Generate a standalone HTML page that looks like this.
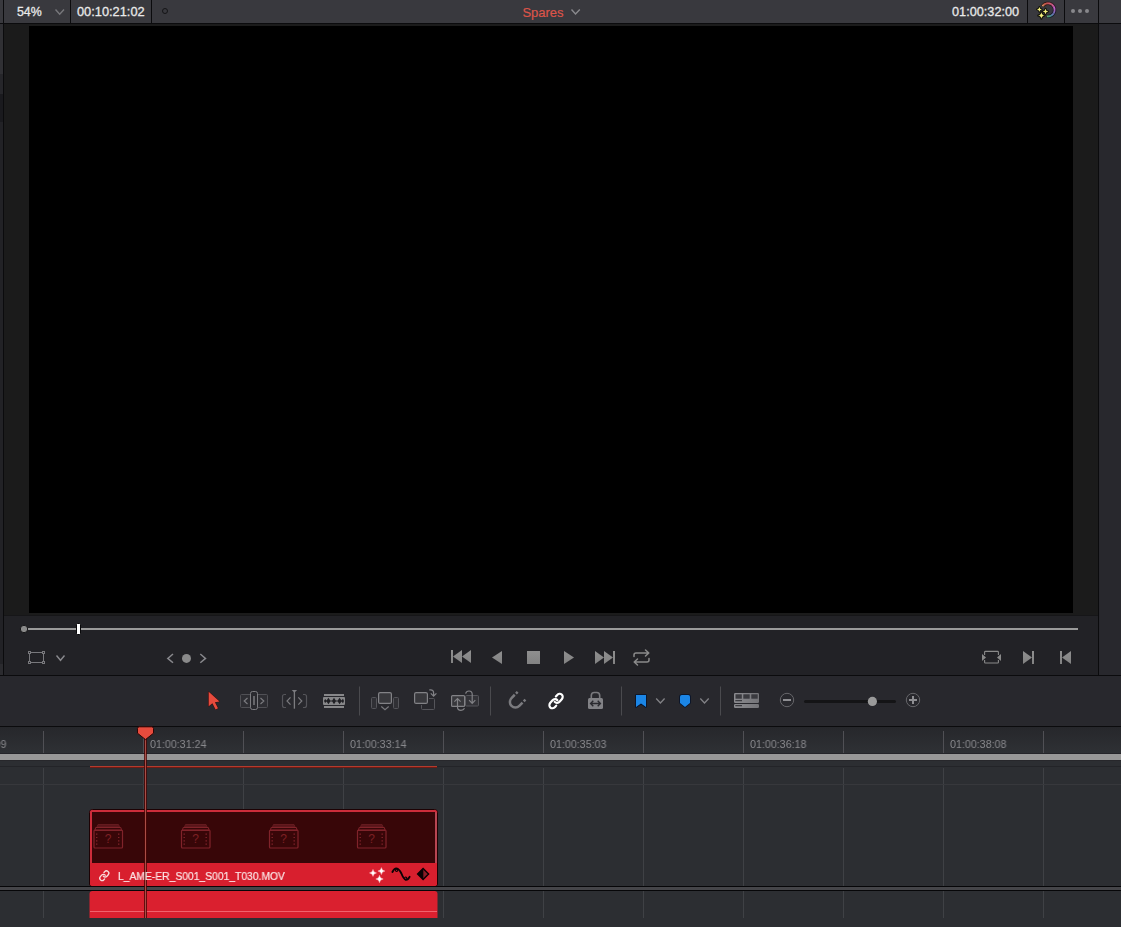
<!DOCTYPE html>
<html><head><meta charset="utf-8">
<style>
*{margin:0;padding:0;box-sizing:border-box}
html,body{width:1121px;height:927px;overflow:hidden;background:#28282d;font-family:"Liberation Sans",sans-serif}
.a{position:absolute}
.t{position:absolute;white-space:nowrap;line-height:1}
svg{position:absolute;overflow:visible}
</style></head><body>
<!-- TOP BAR -->
<div class="a" style="left:0;top:0;width:1121px;height:23px;background:#39393e"></div>
<div class="a" style="left:0;top:23px;width:1121px;height:1px;background:#0b0b0d"></div>
<div class="a" style="left:3px;top:0;width:1px;height:23px;background:#0b0b0d"></div>
<div class="a" style="left:70px;top:0;width:1px;height:23px;background:#0b0b0d"></div>
<div class="a" style="left:151px;top:0;width:1px;height:23px;background:#0b0b0d"></div>
<div class="a" style="left:1027px;top:0;width:1px;height:23px;background:#0b0b0d"></div>
<div class="a" style="left:1064px;top:0;width:1px;height:23px;background:#0b0b0d"></div>
<div class="a" style="left:1098px;top:0;width:1px;height:23px;background:#0b0b0d"></div>
<div class="t" id="t54" style="left:17.3px;top:5px;font-size:13px;color:#e9e9e9;transform:scaleX(0.95);transform-origin:0 0;-webkit-text-stroke:0.3px #e9e9e9">54%</div>
<div class="t" id="ttc1" style="left:77px;top:5px;transform:scaleX(0.985);transform-origin:0 0;font-size:13px;color:#e9e9e9;-webkit-text-stroke:0.3px #e9e9e9">00:10:21:02</div>
<div class="t" id="tsp" style="left:522.4px;top:6px;font-size:13px;color:#dc5449;-webkit-text-stroke:0.2px #dc5449">Spares</div>
<div class="t" id="ttc2" style="left:952.3px;top:5px;transform:scaleX(0.977);transform-origin:0 0;font-size:13px;color:#e9e9e9;-webkit-text-stroke:0.3px #e9e9e9">01:00:32:00</div>
<svg style="left:0;top:0" width="1121" height="24" fill="none">
 <path d="M55.5 9.5 L59.7 14.2 L64 9.5" stroke="#77777b" stroke-width="1.4"/>
 <path d="M571.5 9.5 L575.5 14 L579.8 9.5" stroke="#8a8a8e" stroke-width="1.4"/>
 <circle cx="165" cy="11" r="2.5" stroke="#141416" stroke-width="1"/>
 <path d="M1042.39 6.48A6.55 6.55 0 0 1 1043.19 5.41" stroke="rgb(51, 35, 25)" stroke-width="3.3" fill="none"/><path d="M1043.07 5.54A6.55 6.55 0 0 1 1043.87 4.77" stroke="rgb(50, 30, 22)" stroke-width="3.3" fill="none"/><path d="M1043.74 4.88A6.55 6.55 0 0 1 1044.64 4.23" stroke="rgb(48, 25, 20)" stroke-width="3.3" fill="none"/><path d="M1044.49 4.32A6.55 6.55 0 0 1 1045.47 3.81" stroke="rgb(47, 22, 18)" stroke-width="3.3" fill="none"/><path d="M1045.32 3.88A6.55 6.55 0 0 1 1046.36 3.51" stroke="rgb(47, 21, 18)" stroke-width="3.3" fill="none"/><path d="M1046.19 3.55A6.55 6.55 0 0 1 1047.28 3.34" stroke="rgb(46, 20, 19)" stroke-width="3.3" fill="none"/><path d="M1047.11 3.36A6.55 6.55 0 0 1 1048.22 3.30" stroke="rgb(45, 19, 20)" stroke-width="3.3" fill="none"/><path d="M1048.05 3.30A6.55 6.55 0 0 1 1049.15 3.40" stroke="rgb(45, 19, 22)" stroke-width="3.3" fill="none"/><path d="M1048.98 3.37A6.55 6.55 0 0 1 1050.06 3.63" stroke="rgb(46, 20, 24)" stroke-width="3.3" fill="none"/><path d="M1049.89 3.58A6.55 6.55 0 0 1 1050.92 3.99" stroke="rgb(46, 20, 26)" stroke-width="3.3" fill="none"/><path d="M1050.77 3.91A6.55 6.55 0 0 1 1051.73 4.46" stroke="rgb(46, 21, 28)" stroke-width="3.3" fill="none"/><path d="M1051.59 4.37A6.55 6.55 0 0 1 1052.46 5.05" stroke="rgb(47, 21, 30)" stroke-width="3.3" fill="none"/><path d="M1052.33 4.94A6.55 6.55 0 0 1 1053.10 5.74" stroke="rgb(46, 22, 34)" stroke-width="3.3" fill="none"/><path d="M1052.99 5.60A6.55 6.55 0 0 1 1053.63 6.51" stroke="rgb(46, 22, 38)" stroke-width="3.3" fill="none"/><path d="M1053.54 6.36A6.55 6.55 0 0 1 1054.05 7.34" stroke="rgb(46, 22, 42)" stroke-width="3.3" fill="none"/><path d="M1053.98 7.19A6.55 6.55 0 0 1 1054.35 8.23" stroke="rgb(45, 22, 45)" stroke-width="3.3" fill="none"/><path d="M1054.30 8.07A6.55 6.55 0 0 1 1054.51 9.15" stroke="rgb(41, 22, 44)" stroke-width="3.3" fill="none"/><path d="M1054.49 8.98A6.55 6.55 0 0 1 1054.55 10.09" stroke="rgb(38, 22, 43)" stroke-width="3.3" fill="none"/><path d="M1054.55 9.92A6.55 6.55 0 0 1 1054.44 11.02" stroke="rgb(35, 22, 42)" stroke-width="3.3" fill="none"/><path d="M1054.47 10.85A6.55 6.55 0 0 1 1054.21 11.93" stroke="rgb(32, 22, 41)" stroke-width="3.3" fill="none"/><path d="M1054.26 11.77A6.55 6.55 0 0 1 1053.85 12.79" stroke="rgb(29, 24, 41)" stroke-width="3.3" fill="none"/><path d="M1053.93 12.64A6.55 6.55 0 0 1 1053.37 13.60" stroke="rgb(27, 25, 41)" stroke-width="3.3" fill="none"/><path d="M1053.47 13.46A6.55 6.55 0 0 1 1052.78 14.33" stroke="rgb(25, 26, 41)" stroke-width="3.3" fill="none"/><path d="M1052.90 14.20A6.55 6.55 0 0 1 1052.10 14.96" stroke="rgb(24, 29, 41)" stroke-width="3.3" fill="none"/><path d="M1052.23 14.85A6.55 6.55 0 0 1 1051.32 15.49" stroke="rgb(22, 31, 42)" stroke-width="3.3" fill="none"/><path d="M1051.47 15.40A6.55 6.55 0 0 1 1050.49 15.91" stroke="rgb(21, 33, 38)" stroke-width="3.3" fill="none"/><path d="M1050.64 15.84A6.55 6.55 0 0 1 1049.60 16.20" stroke="rgb(19, 35, 35)" stroke-width="3.3" fill="none"/><path d="M1049.76 16.16A6.55 6.55 0 0 1 1048.67 16.37" stroke="rgb(19, 37, 31)" stroke-width="3.3" fill="none"/><path d="M1048.84 16.35A6.55 6.55 0 0 1 1047.74 16.39" stroke="rgb(21, 37, 29)" stroke-width="3.3" fill="none"/><path d="M1047.91 16.40A6.55 6.55 0 0 1 1046.75 16.28" stroke="rgb(22, 38, 26)" stroke-width="3.3" fill="none"/><path d="M1042.51 6.28A6.55 6.55 0 0 1 1043.19 5.41" stroke="rgb(232, 157, 113)" stroke-width="1.7" fill="none"/><path d="M1043.07 5.54A6.55 6.55 0 0 1 1043.87 4.77" stroke="rgb(226, 136, 101)" stroke-width="1.7" fill="none"/><path d="M1043.74 4.88A6.55 6.55 0 0 1 1044.64 4.23" stroke="rgb(220, 115, 89)" stroke-width="1.7" fill="none"/><path d="M1044.49 4.32A6.55 6.55 0 0 1 1045.47 3.81" stroke="rgb(215, 99, 81)" stroke-width="1.7" fill="none"/><path d="M1045.32 3.88A6.55 6.55 0 0 1 1046.36 3.51" stroke="rgb(212, 95, 84)" stroke-width="1.7" fill="none"/><path d="M1046.19 3.55A6.55 6.55 0 0 1 1047.28 3.34" stroke="rgb(209, 91, 88)" stroke-width="1.7" fill="none"/><path d="M1047.11 3.36A6.55 6.55 0 0 1 1048.22 3.30" stroke="rgb(206, 86, 91)" stroke-width="1.7" fill="none"/><path d="M1048.05 3.30A6.55 6.55 0 0 1 1049.15 3.40" stroke="rgb(206, 87, 98)" stroke-width="1.7" fill="none"/><path d="M1048.98 3.37A6.55 6.55 0 0 1 1050.06 3.63" stroke="rgb(207, 89, 108)" stroke-width="1.7" fill="none"/><path d="M1049.89 3.58A6.55 6.55 0 0 1 1050.92 3.99" stroke="rgb(209, 92, 118)" stroke-width="1.7" fill="none"/><path d="M1050.77 3.91A6.55 6.55 0 0 1 1051.73 4.46" stroke="rgb(210, 95, 128)" stroke-width="1.7" fill="none"/><path d="M1051.59 4.37A6.55 6.55 0 0 1 1052.46 5.05" stroke="rgb(212, 97, 138)" stroke-width="1.7" fill="none"/><path d="M1052.33 4.94A6.55 6.55 0 0 1 1053.10 5.74" stroke="rgb(211, 98, 154)" stroke-width="1.7" fill="none"/><path d="M1052.99 5.60A6.55 6.55 0 0 1 1053.63 6.51" stroke="rgb(209, 99, 171)" stroke-width="1.7" fill="none"/><path d="M1053.54 6.36A6.55 6.55 0 0 1 1054.05 7.34" stroke="rgb(207, 100, 189)" stroke-width="1.7" fill="none"/><path d="M1053.98 7.19A6.55 6.55 0 0 1 1054.35 8.23" stroke="rgb(203, 100, 204)" stroke-width="1.7" fill="none"/><path d="M1054.30 8.07A6.55 6.55 0 0 1 1054.51 9.15" stroke="rgb(188, 100, 199)" stroke-width="1.7" fill="none"/><path d="M1054.49 8.98A6.55 6.55 0 0 1 1054.55 10.09" stroke="rgb(173, 100, 194)" stroke-width="1.7" fill="none"/><path d="M1054.55 9.92A6.55 6.55 0 0 1 1054.44 11.02" stroke="rgb(158, 100, 189)" stroke-width="1.7" fill="none"/><path d="M1054.47 10.85A6.55 6.55 0 0 1 1054.21 11.93" stroke="rgb(145, 102, 186)" stroke-width="1.7" fill="none"/><path d="M1054.26 11.77A6.55 6.55 0 0 1 1053.85 12.79" stroke="rgb(134, 108, 186)" stroke-width="1.7" fill="none"/><path d="M1053.93 12.64A6.55 6.55 0 0 1 1053.37 13.60" stroke="rgb(123, 113, 186)" stroke-width="1.7" fill="none"/><path d="M1053.47 13.46A6.55 6.55 0 0 1 1052.78 14.33" stroke="rgb(113, 120, 187)" stroke-width="1.7" fill="none"/><path d="M1052.90 14.20A6.55 6.55 0 0 1 1052.10 14.96" stroke="rgb(107, 130, 188)" stroke-width="1.7" fill="none"/><path d="M1052.23 14.85A6.55 6.55 0 0 1 1051.32 15.49" stroke="rgb(100, 140, 190)" stroke-width="1.7" fill="none"/><path d="M1051.47 15.40A6.55 6.55 0 0 1 1050.49 15.91" stroke="rgb(94, 149, 174)" stroke-width="1.7" fill="none"/><path d="M1050.64 15.84A6.55 6.55 0 0 1 1049.60 16.20" stroke="rgb(87, 159, 158)" stroke-width="1.7" fill="none"/><path d="M1049.76 16.16A6.55 6.55 0 0 1 1048.67 16.37" stroke="rgb(88, 166, 143)" stroke-width="1.7" fill="none"/><path d="M1048.84 16.35A6.55 6.55 0 0 1 1047.74 16.39" stroke="rgb(94, 170, 130)" stroke-width="1.7" fill="none"/><path d="M1047.91 16.40A6.55 6.55 0 0 1 1046.98 16.32" stroke="rgb(101, 174, 118)" stroke-width="1.7" fill="none"/><path d="M1039.4 7.0Q1039.64 9.16 1041.8000000000002 9.4Q1039.64 9.64 1039.4 11.8Q1039.16 9.64 1037.0 9.4Q1039.16 9.16 1039.4 7.0Z" fill="#f4f07e" stroke="#121208" stroke-width="1.8" stroke-linejoin="round" paint-order="stroke"/><path d="M1045.5 8.7Q1045.78 11.22 1048.3 11.5Q1045.78 11.78 1045.5 14.3Q1045.22 11.78 1042.7 11.5Q1045.22 11.22 1045.5 8.7Z" fill="#f4f07e" stroke="#121208" stroke-width="1.8" stroke-linejoin="round" paint-order="stroke"/><path d="M1041.4 12.2Q1041.73 15.17 1044.7 15.5Q1041.73 15.83 1041.4 18.8Q1041.0700000000002 15.83 1038.1000000000001 15.5Q1041.0700000000002 15.17 1041.4 12.2Z" fill="#f4f07e" stroke="#121208" stroke-width="1.8" stroke-linejoin="round" paint-order="stroke"/>
 <circle cx="1073" cy="11" r="2" fill="#88888c"/><circle cx="1080" cy="11" r="2" fill="#88888c"/><circle cx="1087" cy="11" r="2" fill="#88888c"/>
</svg>
<!-- LEFT STRIP -->
<div class="a" style="left:0;top:24px;width:3px;height:50px;background:#303034"></div>
<div class="a" style="left:0;top:74px;width:3px;height:20px;background:#26262a"></div>
<div class="a" style="left:0;top:94px;width:3px;height:28px;background:#1a1a1e"></div>
<div class="a" style="left:0;top:122px;width:3px;height:542px;background:#222226"></div>
<div class="a" style="left:0;top:664px;width:3px;height:11px;background:#2b2b2f"></div>
<div class="a" style="left:3px;top:24px;width:1px;height:651px;background:#0b0b0d"></div>
<!-- VIEWER -->
<div class="a" style="left:4px;top:24px;width:1094px;height:591px;background:#1b1b1b"></div>
<div class="a" style="left:29px;top:26px;width:1044px;height:587px;background:#000"></div>
<div class="a" style="left:4px;top:615px;width:1094px;height:1px;background:#161618"></div>
<div class="a" style="left:1098px;top:24px;width:1px;height:651px;background:#0b0b0d"></div>
<!-- TRANSPORT -->
<div class="a" style="left:4px;top:616px;width:1094px;height:59px;background:#222226"></div>
<div class="a" style="left:0;top:675px;width:1121px;height:1px;background:#0b0b0d"></div>
<svg id="transport" style="left:0;top:616px" width="1121" height="60" viewBox="0 616 1121 60" fill="none">
 <rect x="27" y="628" width="1051" height="2" fill="#9a9a9a"/>
 <circle cx="24" cy="629" r="3.7" fill="#8a8a8a" stroke="#0c0c0e" stroke-width="0.9"/>
 <rect x="76.5" y="623.5" width="4" height="11" rx="0.8" fill="#fff" stroke="#070709" stroke-width="1"/>
 <g stroke="#78787c" stroke-width="1">
  <path d="M31 652.5H42M31 662.5H42M29.5 654V661M43.5 654V661"/>
  <rect x="28.5" y="651.5" width="2" height="2"/><rect x="42.5" y="651.5" width="2" height="2"/>
  <rect x="28.5" y="661.5" width="2" height="2"/><rect x="42.5" y="661.5" width="2" height="2"/>
 </g>
 <path d="M56.5 655.5L60.5 660.3L64.5 655.5" stroke="#88888c" stroke-width="1.4"/>
 <path d="M173 654L167.8 658.4L173 662.8" stroke="#88888c" stroke-width="1.5"/>
 <circle cx="186.5" cy="658.4" r="4.5" fill="#8a8a8a"/>
 <path d="M200.3 654L205.5 658.4L200.3 662.8" stroke="#88888c" stroke-width="1.5"/>
 <defs><linearGradient id="tg" gradientUnits="userSpaceOnUse" x1="0" y1="650" x2="0" y2="664"><stop offset="0" stop-color="#909090"/><stop offset="1" stop-color="#828282"/></linearGradient></defs>
 <g fill="url(#tg)">
  <rect x="451" y="650" width="2" height="13"/><path d="M462 650V663L453 656.5Z"/><path d="M471 650V663L462 656.5Z"/>
  <path d="M502 651V664L492 657.5Z"/>
  <rect x="527" y="651" width="13" height="13"/>
  <path d="M564 651V664L574 657.5Z"/>
  <path d="M595 651V664L604 657.5Z"/><path d="M604 651V664L613 657.5Z"/><rect x="613" y="651" width="2" height="13"/>
  <path d="M1023 651V664L1032 657.5Z"/><rect x="1032" y="651" width="2" height="13"/>
  <rect x="1060" y="651" width="2" height="13"/><path d="M1071 651V664L1062 657.5Z"/>
  <path d="M982 654V661L986 657.5Z"/><path d="M1001 654V661L997 657.5Z"/>
 </g>
 <path d="M984.6 655V652.2Q984.6 651.4 985.4 651.4H997.6Q998.4 651.4 998.4 652.2V655M984.6 660V662.2Q984.6 663 985.4 663H997.6Q998.4 663 998.4 662.2V660" stroke="#8a8a8a" stroke-width="1.1"/>
 <g stroke="#8a8a8a" stroke-width="1.5" stroke-linecap="round" stroke-linejoin="round">
  <path d="M634 656.5V655Q634 653 636 653H648.5M645.5 650L648.8 653L645.5 656"/>
  <path d="M649 658.5V660Q649 662 647 662H634.5M637.5 659L634.2 662L637.5 665"/>
 </g>
</svg>
<!-- TOOLBAR -->
<div class="a" style="left:0;top:676px;width:1121px;height:50px;background:#28282d"></div>
<div class="a" style="left:0;top:726px;width:1121px;height:1px;background:#0b0b0d"></div>
<svg id="toolbar" style="left:0;top:676px" width="1121" height="50" viewBox="0 676 1121 50" fill="none">
 <!-- arrow -->
 <path d="M208.7 691.8V706.3L212.4 703.2L215.6 709.4L218 708.2L214.9 702.2L219.5 701.4Z" fill="#e64b3d" stroke="#3a0b0b" stroke-width="1" stroke-linejoin="round" paint-order="stroke"/>
 <!-- trim -->
 <rect x="240.5" y="694.5" width="27" height="13" rx="1" fill="#2e2e33" stroke="#505055"/>
 <rect x="250.5" y="691.5" width="7" height="18" rx="2" fill="#2a2a2f" stroke="#7c7c80"/>
 <rect x="253" y="696" width="2" height="9" fill="#66666a"/>
 <path d="M247.5 698L244.2 701L247.5 704M260.5 698L263.8 701L260.5 704" stroke="#7a7a7e" stroke-width="1.2"/>
 <!-- dynamic trim -->
 <path d="M286 694.5H284.5Q282.5 694.5 282.5 696.5V705.5Q282.5 707.5 284.5 707.5H286M303 694.5H304.5Q306.5 694.5 306.5 696.5V705.5Q306.5 707.5 304.5 707.5H303" stroke="#55555a" stroke-width="1.2"/>
 <path d="M294.4 692V708.7" stroke="#7c7c80" stroke-width="1.3"/>
 <path d="M291.7 690H297.1L294.4 692.8Z" fill="#7c7c80"/>
 <path d="M290.5 697.3L287 701L290.5 704.7M298.3 697.3L301.8 701L298.3 704.7" stroke="#7a7a7e" stroke-width="1.2"/>
 <!-- blade -->
 <rect x="324" y="694" width="20" height="2" fill="#878789"/><rect x="324" y="706" width="20" height="2" fill="#878789"/>
 <rect x="323" y="697" width="22" height="8" rx="1" fill="#878789"/>
 <path d="M324 701.0L325.1 698.9L326.6 700.4L328.4 697.8L330.3 700.5L332.2 700.5L334 697.8L335.8 700.5L337.7 700.5L339.6 697.8L341.4 700.4L343 698.7L344 701.0L343 703.3L341.4 701.6L339.6 704.2L337.7 701.5L335.8 701.5L334 704.2L332.2 701.5L330.3 701.5L328.4 704.2L326.6 701.6L325.1 703.1Z" fill="#202024"/>
 <!-- dividers -->
 <path d="M359.5 686.5V715.5M490.5 686.5V715.5M621.5 686.5V715.5M720.5 686.5V715.5" stroke="#4a4a4e" stroke-width="1"/>
 <!-- insert -->
 <rect x="371.5" y="697.5" width="5" height="11" rx="1" fill="#303035" stroke="#55555a"/>
 <rect x="393.5" y="697.5" width="5" height="11" rx="1" fill="#303035" stroke="#55555a"/>
 <rect x="378.6" y="692.6" width="12.8" height="10.8" rx="1.5" fill="#38383c" stroke="#828286" stroke-width="1.2"/>
 <path d="M381.3 706.5L385 709.6L388.7 706.5" stroke="#7a7a7e" stroke-width="1.2"/>
 <!-- overwrite -->
 <rect x="421.5" y="698.5" width="13" height="11" rx="1" stroke="#55555a"/>
 <rect x="413" y="691" width="16" height="14" fill="#28282d"/>
 <rect x="414.6" y="692.6" width="12.8" height="10.8" rx="1.5" fill="#38383c" stroke="#828286" stroke-width="1.2"/>
 <path d="M429.3 689.8H430.6Q433.6 689.8 433.6 692.8V696M430.8 693.4L433.6 696.2L436.4 693.4" stroke="#828286" stroke-width="1.2"/>
 <!-- replace -->
 <rect x="465.5" y="695.5" width="13" height="10.5" rx="1" fill="#333338" stroke="#55555a"/>
 <rect x="451.6" y="695.6" width="13" height="10.8" rx="1" fill="#38383c" stroke="#828286" stroke-width="1.2"/>
 <path d="M457.5 698.8V707Q457.5 710.3 461 710.3Q463.5 710.3 464.5 708.2M454.4 701.6L457.5 698.5L460.6 701.6" stroke="#828286" stroke-width="1.2"/>
 <path d="M465.6 693.6Q466.3 691 469 691Q472.2 691 472.2 694.2V703M469.1 700.2L472.2 703.3L475.3 700.2" stroke="#828286" stroke-width="1.2"/>
 <!-- magnet -->
 <g transform="translate(515.4 701.9) rotate(45)" stroke="#7a7a7e" stroke-width="2.5">
  <path d="M-5.5 -4.6V0A5.5 5.5 0 0 0 5.5 0V-4.6"/>
  <path d="M-5.5 -6.3V-8.7M5.5 -6.3V-8.7"/>
 </g>
 <!-- link -->
 <g transform="translate(556.05 701.05) rotate(-49) scale(0.72 0.63) rotate(45) translate(-12 -12)" stroke="#fff" stroke-width="2.2" stroke-linecap="round" stroke-linejoin="round">
  <path vector-effect="non-scaling-stroke" d="M10 13a5 5 0 0 0 7.54.54l3-3a5 5 0 0 0-7.07-7.07l-1.72 1.71"/>
  <path vector-effect="non-scaling-stroke" d="M14 11a5 5 0 0 0-7.54-.54l-3 3a5 5 0 0 0 7.07 7.07l1.71-1.71"/>
 </g>
 <!-- lock -->
 <path d="M591.3 698.5V695.5Q591.3 692.5 594.3 692.5H596.7Q599.7 692.5 599.7 695.5V698.5" stroke="#7a7a7e" stroke-width="1.6"/>
 <rect x="588" y="698" width="15" height="11" rx="1.5" fill="#828286"/>
 <path d="M591 703.5H600M593.3 700.8L590.6 703.5L593.3 706.2M597.7 700.8L600.4 703.5L597.7 706.2" stroke="#2a2a2f" stroke-width="1.4"/>
 <!-- flag -->
 <path d="M636 695H646V707L641 703.6L636 707Z" fill="#1b86e6" stroke="#05122a" stroke-width="1.6" stroke-linejoin="round" paint-order="stroke"/>
 <path d="M656.2 698.5L660.4 703L664.6 698.5" stroke="#828286" stroke-width="1.3"/>
 <path d="M680 696.8Q680 695 681.8 695H688.2Q690 695 690 696.8V703L685 707L680 703Z" fill="#1b86e6" stroke="#05122a" stroke-width="1.6" stroke-linejoin="round" paint-order="stroke"/>
 <path d="M700.3 698.5L704.5 703L708.7 698.5" stroke="#828286" stroke-width="1.3"/>
 <!-- timeline view -->
 <defs><linearGradient id="tv" x1="0" x2="1"><stop offset="0" stop-color="#8c8c90"/><stop offset="1" stop-color="#747478"/></linearGradient></defs>
 <rect x="734" y="693" width="25" height="10" rx="1.2" fill="url(#tv)"/>
 <rect x="735.5" y="694.3" width="6.3" height="4.4" fill="#3a3a3f"/><rect x="743.3" y="694.3" width="6.4" height="4.4" fill="#3a3a3f"/><rect x="751.3" y="694.3" width="6.4" height="4.4" fill="#3a3a3f"/>
 <rect x="735.3" y="700.2" width="6.7" height="1" fill="#2a2a2f"/>
 <rect x="734" y="704" width="25" height="4" rx="1.2" fill="url(#tv)"/>
 <rect x="735.3" y="705.2" width="6.7" height="1" fill="#2a2a2f"/>
 <!-- zoom -->
 <circle cx="787" cy="700" r="6.7" stroke="#66666a" stroke-width="1"/><rect x="783" y="699" width="8" height="2" fill="#8e8e92"/>
 <rect x="804" y="700" width="92" height="3" rx="1.5" fill="#141416"/>
 <circle cx="872.4" cy="701.4" r="4.6" fill="#9a9a9a"/>
 <circle cx="913" cy="700" r="6.7" stroke="#66666a" stroke-width="1"/><rect x="909" y="699" width="8" height="2" fill="#8e8e92"/><rect x="912" y="696" width="2" height="8" fill="#8e8e92"/>
</svg>
<!-- TIMELINE -->
<div id="ruler" class="a" style="left:0;top:727px;width:1121px;height:27px;background:linear-gradient(#26272b,#2f3135)"></div>
<div class="a" style="left:0;top:754px;width:1121px;height:6px;background:#989898"></div>
<div class="a" style="left:0;top:760px;width:1121px;height:167px;background:#2c2e32"></div>
<svg id="timeline" style="left:0;top:727px" width="1121" height="200" viewBox="0 727 1121 200" fill="none">
 <defs><g id="th" stroke="#80232a" stroke-width="1" fill="none">
  <path d="M3.5 3L4.5 0.5H25L26 3Z" fill="#5a141a" stroke="#641a1e"/>
  <path d="M1.5 6L2.2 3.5H27.3L28 6" />
  <rect x="0.5" y="6" width="28.5" height="18" rx="1" stroke-width="1.2"/>
  <path d="M1 6.4H28.5" stroke-width="1.2"/>
  <path d="M3.2 9.6V21" stroke-dasharray="1.2 2.1" stroke-width="1.4"/>
  <path d="M25.2 9.6V21" stroke-dasharray="1.2 2.1" stroke-width="1.4"/>
 </g></defs>
 <path d="M43.5 731V754M143.5 731V754M243.5 731V754M343.5 731V754M443.5 731V754M543.5 731V754M643.5 731V754M743.5 731V754M843.5 731V754M943.5 731V754M1043.5 731V754" stroke="#505055" stroke-width="1"/>
 <path d="M43.5 768V918M143.5 768V918M243.5 768V918M343.5 768V918M443.5 768V918M543.5 768V918M643.5 768V918M743.5 768V918M843.5 768V918M943.5 768V918M1043.5 768V918" stroke="#3f4145" stroke-width="1"/>
 <rect x="0" y="753" width="1121" height="1" fill="#25252a"/>
 <rect x="0" y="760" width="1121" height="1" fill="#27272b"/>
 <rect x="0" y="766" width="1121" height="1" fill="#232428"/>
 <rect x="0" y="784" width="1121" height="1" fill="#37383c"/>
 <rect x="90" y="766" width="347" height="1" fill="#b43b2d"/><rect x="90" y="767" width="347" height="1" fill="#6e1a14"/>
 <!-- separator -->
 <rect x="0" y="886" width="1121" height="1" fill="#060608"/><rect x="0" y="887" width="1121" height="3" fill="#454549"/><rect x="0" y="890" width="1121" height="1" fill="#060608"/>
 <!-- video clip -->
 <path d="M89.5 884V812.5Q89.5 809.5 92.5 809.5H434.5Q437.5 809.5 437.5 812.5V884Q437.5 886 435.5 886H91.5Q89.5 886 89.5 884Z" fill="#d81f2e" stroke="#1c0204" stroke-width="1"/>
 <path d="M90 884V813Q90 810 93 810H434Q437 810 437 813V884Q437 886 435 886H92Q90 886 90 884Z" fill="#d81f2e"/>
 <path d="M90 863V813Q90 810 93 810H434Q437 810 437 813V863Z" fill="#cc2d3b"/>
 <path d="M435 863V812.5H437V813Q437 813 437 813V863Z" fill="#b84552"/>
 <rect x="92" y="812" width="343" height="51" fill="#380608"/>
 <use href="#th" x="93.5" y="824"/><use href="#th" x="181" y="824"/><use href="#th" x="269" y="824"/><use href="#th" x="357" y="824"/>
 <!-- audio clip -->
 <path d="M89.5 918V894Q89.5 891 92.5 891H434.5Q437.5 891 437.5 894V918Z" fill="#da202f"/>
 <rect x="90" y="911" width="347" height="1" fill="#f0626c"/>
 <!-- label icons -->
 <g transform="translate(104.3 875.7) rotate(-49) scale(0.47 0.47) rotate(45) translate(-12 -12)" stroke="#f8dcdc" stroke-width="1.35" stroke-linecap="round" stroke-linejoin="round">
  <path vector-effect="non-scaling-stroke" d="M10 13a5 5 0 0 0 7.54.54l3-3a5 5 0 0 0-7.07-7.07l-1.72 1.71"/>
  <path vector-effect="non-scaling-stroke" d="M14 11a5 5 0 0 0-7.54-.54l-3 3a5 5 0 0 0 7.07 7.07l1.71-1.71"/>
 </g>
 <g fill="#fff" stroke="#ffd0d4" stroke-opacity="0.55" stroke-width="0.8"><path d="M373 869.4Q373.455 872.4449999999999 376.5 872.9Q373.455 873.355 373 876.4Q372.545 873.355 369.5 872.9Q372.545 872.4449999999999 373 869.4Z"/><path d="M381.4 867.6Q381.85499999999996 870.645 384.9 871.1Q381.85499999999996 871.5550000000001 381.4 874.6Q380.945 871.5550000000001 377.9 871.1Q380.945 870.645 381.4 867.6Z"/><path d="M379.5 875.3Q379.981 878.519 383.2 879Q379.981 879.481 379.5 882.7Q379.019 879.481 375.8 879Q379.019 878.519 379.5 875.3Z"/></g>
 <path d="M392.4 872Q394.5 868 396.6 868.4Q399 868.8 401.4 873.5Q403.6 879 405.7 879.8Q408 880 409.6 876.8" stroke="#0a0204" stroke-width="1.9" stroke-linecap="round"/>
 <circle cx="396.6" cy="870.3" r="1.15" stroke="#0a0204" stroke-width="1.1" fill="#c22030"/>
 <circle cx="405.7" cy="878.2" r="1.15" stroke="#0a0204" stroke-width="1.1" fill="#c22030"/>
 <path d="M423.1 868.4L428.6 873.9L423.1 879.4L417.6 873.9Z" fill="#8c1c26" stroke="#0a0204" stroke-width="1.4" stroke-linejoin="miter"/>
 <path d="M423.3 868.4V879.4L417.6 873.9Z" fill="#0a0204"/>
 <!-- playhead -->
 <rect x="144" y="738" width="3" height="180" fill="#4a0505" fill-opacity="0.8"/>
 <rect x="145" y="738" width="1" height="180" fill="#a84e46"/>
 <path d="M139.2 726.8H151.8Q153.5 726.8 153.5 728.5V733.2L145.5 739.6L137.5 733.2V728.5Q137.5 726.8 139.2 726.8Z" fill="#e64b3d" stroke="#2c0606" stroke-width="1"/>
</svg>
<style>.rl{top:739px;font-size:11px;color:#8a8a8e;will-change:transform;transform:scaleX(0.972);transform-origin:0 0}.q{top:833px;font-size:12px;color:#7d2024;width:6px;text-align:center}</style><div class="t rl" style="left:-50.4px">01:00:30:09</div><div class="t rl" style="left:149.6px">01:00:31:24</div><div class="t rl" style="left:349.6px">01:00:33:14</div><div class="t rl" style="left:549.6px">01:00:35:03</div><div class="t rl" style="left:749.6px">01:00:36:18</div><div class="t rl" style="left:949.6px">01:00:38:08</div><div class="t q" style="left:104.7px">?</div><div class="t q" style="left:192.2px">?</div><div class="t q" style="left:280.2px">?</div><div class="t q" style="left:368.2px">?</div><div class="t" id="clipname" style="will-change:transform;-webkit-text-stroke:0.2px #fbe6e7;left:117.5px;top:870.5px;font-size:11px;color:#fbe6e7;transform:scaleX(0.938);transform-origin:0 0">L_AME-ER_S001_S001_T030.MOV</div>
</body></html>
